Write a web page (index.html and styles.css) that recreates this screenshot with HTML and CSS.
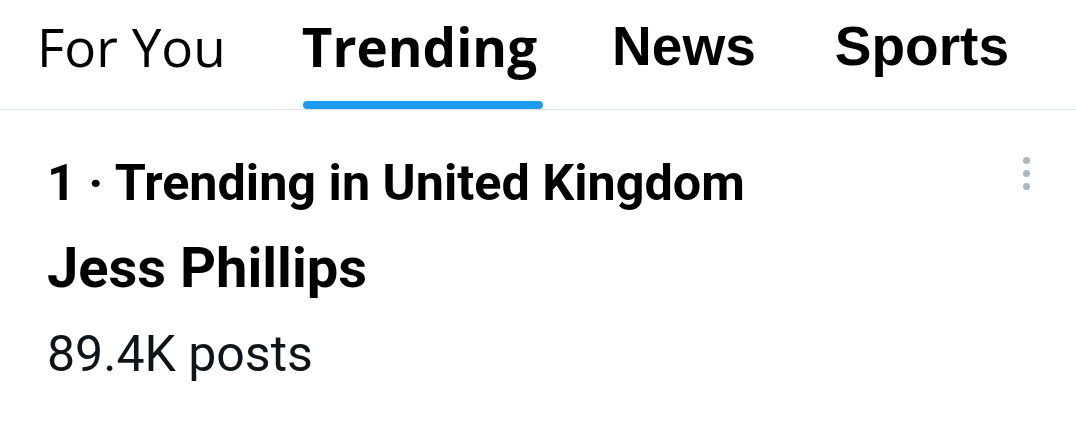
FILE: index.html
```html
<!DOCTYPE html>
<html>
<head>
<meta charset="utf-8">
<link rel="stylesheet" href="styles.css">
</head>
<body>
<nav class="tabs">
  <div class="tab tab-foryou"><span class="label">For You</span></div>
  <div class="tab tab-trending active"><span class="label">Trending</span><span class="indicator"></span></div>
  <div class="tab tab-news"><span class="label">News</span></div>
  <div class="tab tab-sports"><span class="label">Sports</span></div>
</nav>
<section class="trend">
  <div class="trend-text">
    <div class="meta">1 · Trending in United Kingdom</div>
    <div class="name">Jess Phillips</div>
    <div class="count">89.4K posts</div>
  </div>
  <div class="more">
    <span class="dot"></span><span class="dot"></span><span class="dot"></span>
  </div>
</section>
</body>
</html>
```
FILE: styles.css
```css
html, body {
  margin: 0;
  padding: 0;
  background: #ffffff;
}
body {
  width: 1076px;
  height: 446px;
  overflow: hidden;
  color: #0f1419;
  font-family: "Open Sans", "Liberation Sans", sans-serif;
}
.tabs {
  display: flex;
  height: 109px;
  border-bottom: 1px solid #dfe4e7;
  padding-left: 37px;
}
.tab {
  position: relative;
  display: flex;
  flex-direction: column;
  align-items: flex-start;
}
.label {
  display: block;
  font-size: 53px;
  line-height: 1;
  padding-top: 20px;
  color: #000;
}
.tab-foryou .label { font-family: "Open Sans", sans-serif; font-weight: 500; }
.tab-trending { margin-left: 76px; }
.tab-trending .label { font-family: "Open Sans", sans-serif; font-weight: 700; }
.tab-news { margin-left: 75px; }
.tab-news .label, .tab-sports .label { font-family: "Liberation Sans", sans-serif; font-weight: 700; font-size: 55px; padding-top: 19px; }
.tab-sports { margin-left: 79px; }
.indicator {
  position: absolute;
  left: 1px;
  right: -6px;
  bottom: 0;
  height: 8px;
  border-radius: 4px;
  background: #1d9bf0;
}
.trend {
  display: flex;
  justify-content: space-between;
  padding: 0 46px 0 47px;
}
.meta {
  font-family: "Roboto", sans-serif;
  font-weight: 700;
  font-size: 50.3px;
  line-height: 1;
  margin-top: 48px;
  color: #000;
}
.name {
  font-family: "Roboto", sans-serif;
  font-weight: 700;
  font-size: 56px;
  line-height: 1;
  margin-top: 32px;
  color: #000;
}
.count {
  font-family: "Roboto", sans-serif;
  font-weight: 400;
  font-size: 50px;
  line-height: 1;
  margin-top: 33px;
  color: #0f1419;
}
.more {
  display: flex;
  flex-direction: column;
  gap: 6px;
  padding-top: 47px;
}
.dot {
  width: 7px;
  height: 7px;
  border-radius: 50%;
  background: #aab8c2;
}
```
